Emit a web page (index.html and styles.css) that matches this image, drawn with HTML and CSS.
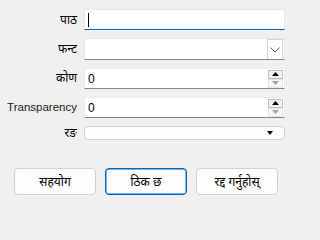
FILE: index.html
```html
<!DOCTYPE html>
<html>
<head>
<meta charset="utf-8">
<link rel="stylesheet" href="styles.css">
</head>
<body>
<div class="dialog">
  <div class="form">
    <label class="lbl">पाठ</label>
    <div class="field text focus"><span class="caret"></span></div>

    <label class="lbl">फन्ट</label>
    <div class="field combo">
      <span class="dd">
        <svg width="10" height="6" viewBox="0 0 10 6"><path d="M0.5 0.5 L5 5 L9.5 0.5" fill="none" stroke="#606060" stroke-width="1"/></svg>
      </span>
    </div>

    <label class="lbl">कोण</label>
    <div class="field spin">
      <span class="val">0</span>
      <span class="spinbtns">
        <span class="up"><svg width="7" height="4" viewBox="0 0 7 4"><path d="M0 4 L3.5 0 L7 4 Z" fill="#000"/></svg></span>
        <span class="down"><svg width="7" height="4" viewBox="0 0 7 4"><path d="M0 0 L3.5 4 L7 0 Z" fill="#a0a0a0"/></svg></span>
      </span>
    </div>

    <label class="lbl latin">Transparency</label>
    <div class="field spin">
      <span class="val">0</span>
      <span class="spinbtns">
        <span class="up"><svg width="7" height="4" viewBox="0 0 7 4"><path d="M0 4 L3.5 0 L7 4 Z" fill="#000"/></svg></span>
        <span class="down"><svg width="7" height="4" viewBox="0 0 7 4"><path d="M0 0 L3.5 4 L7 0 Z" fill="#a0a0a0"/></svg></span>
      </span>
    </div>

    <label class="lbl">रङ</label>
    <div class="field color">
      <svg width="6" height="4" viewBox="0 0 6 4"><path d="M0 0 L3 4 L6 0 Z" fill="#000"/></svg>
    </div>
  </div>

  <div class="buttons">
    <button class="btn">सहयोग</button>
    <button class="btn default">ठिक छ</button>
    <button class="btn">रद्द गर्नुहोस्</button>
  </div>
</div>
</body>
</html>
```
FILE: styles.css
```css
html, body {
  margin: 0;
  padding: 0;
  background: #f0f0f0;
  font-family: "Liberation Sans", "Noto Sans", sans-serif;
  font-size: 12px;
  color: #000;
}
.dialog {
  width: 293px;
  height: 210px;
  box-sizing: border-box;
  padding: 9px 8px 0 0;
}
.form {
  display: grid;
  grid-template-columns: 77px 201px;
  column-gap: 7px;
  row-gap: 7px;
  align-items: center;
}
.lbl {
  text-align: right;
  white-space: nowrap;
  line-height: 14px;
  font-weight: 400;
}
.lbl.latin {
  font-size: 11.5px;
  color: #1a1a1a;
}
.field {
  box-sizing: border-box;
  background: #fff;
  position: relative;
  display: flex;
  align-items: center;
}
.text {
  height: 21px;
  border: 1px solid #e5e5e5;
  border-bottom: 1px solid #0067c0;
  padding-left: 3px;
}
.caret {
  width: 1px;
  height: 14px;
  background: #000;
}
.combo {
  height: 22px;
  border: 1px solid #e5e5e5;
  border-bottom: 1px solid #868686;
  justify-content: flex-end;
  margin-top: 1px;
}
.dd {
  width: 16px;
  height: 20px;
  box-sizing: border-box;
  border: 1px solid #d5d5d5;
  border-bottom: none;
  margin-right: 1px;
  display: flex;
  align-items: center;
  justify-content: center;
  background: #fff;
}
.spin {
  height: 21px;
  border: 1px solid #ececec;
  border-bottom: 1px solid #868686;
  justify-content: space-between;
  margin-top: 1px;
}
.val {
  padding-left: 3px;
}
.spinbtns {
  display: flex;
  flex-direction: column;
  margin-right: 1px;
}
.spinbtns span {
  width: 15px;
  height: 9px;
  box-sizing: border-box;
  display: flex;
  align-items: center;
  justify-content: center;
}
.spinbtns .up {
  border: 1px solid #bdbdbd;
  background: #f3f3f3;
}
.spinbtns .down {
  border: 1px solid #e3e3e3;
  background: #f7f7f7;
}
.color {
  height: 14px;
  border: 1px solid #cfcfcf;
  border-radius: 4px;
  justify-content: flex-end;
  padding-right: 11px;
  background: #fdfdfd;
  margin-top: 1px;
}
.buttons {
  display: flex;
  gap: 9px;
  margin-top: 28px;
  padding-left: 14px;
}
.btn {
  box-sizing: border-box;
  width: 82px;
  height: 27px;
  background: #fdfdfd;
  border: 1px solid #d0d0d0;
  border-radius: 4px;
  font-family: inherit;
  font-size: 12px;
  color: #000;
  padding: 0;
}
.btn.default {
  border: 1px solid #0067c0;
  box-shadow: inset 0 0 0 0.5px #0067c0;
}
```
